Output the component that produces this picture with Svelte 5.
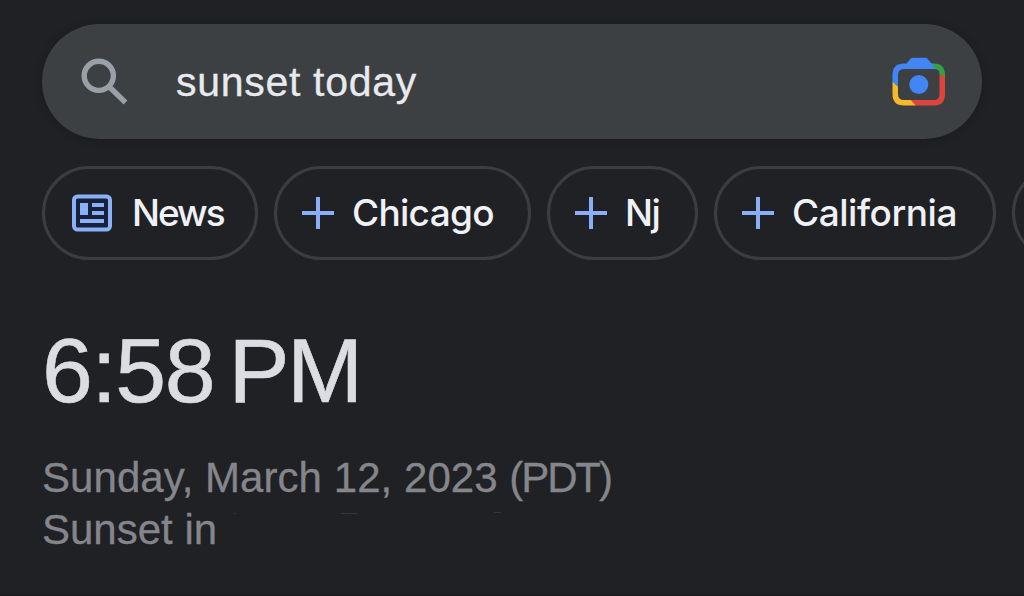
<script lang="ts">
	type Chip = { label: string; icon: 'news' | 'plus'; width: number; spacing: number };

	let query = 'sunset today';
	let chips: Chip[] = [
		{ label: 'News', icon: 'news', width: 216, spacing: -2 },
		{ label: 'Chicago', icon: 'plus', width: 257, spacing: -0.7 },
		{ label: 'Nj', icon: 'plus', width: 151, spacing: -1.4 },
		{ label: 'California', icon: 'plus', width: 282, spacing: -0.45 },
		{ label: '', icon: 'plus', width: 160, spacing: 0 }
	];
</script>

<main class="page">
	<div class="search">
		<svg class="search-icon" viewBox="0 0 48 48" width="48" height="48">
			<circle cx="18.8" cy="17.8" r="14.6" />
			<path d="M29.500 29L45.500 44.500" />
		</svg>
		<span class="query">{query}</span>
		<svg class="lens" viewBox="0 0 54 50" width="54" height="50">
			<path class="blue" d="M0.500 26V18Q0.500 6.500 12 6.500H14.500L18.500 1.800Q19.500 0.800 21 0.800H33Q34.500 0.800 35.500 1.800L39.500 6.500H41L44 12H12Q6 12 6 18V29Z" />
			<path class="green" d="M40 6.500H42Q53 6.500 53 18V21L47.500 17Q47.500 12 42 12H43.500Z" />
			<path class="red" d="M47.500 16.500L53 20V37Q53 48.500 42 48.500H23L18.500 43H42Q47.500 43 47.500 37Z" />
			<path class="yellow" d="M0.500 25L6 29.500V37Q6 43 12 43H19L23.500 48.500H12Q0.500 48.500 0.500 37Z" />
			<circle class="blue" cx="26.800" cy="27.500" r="9.500" />
		</svg>
	</div>

	<div class="chips">
		{#each chips as chip}
			<div class="chip" style="width: {chip.width}px">
				{#if chip.icon === 'news'}
					<svg class="news" viewBox="0 0 40 38" width="40" height="38">
						<rect class="frame" x="2" y="2.500" width="36" height="33" rx="3.500" />
						<path d="M8 9h8v12H8zM20 9h12v4H20zM20 17h12v4H20zM8 25h24v4H8z" />
					</svg>
				{:else}
					<svg class="plus" viewBox="0 0 32 32" width="32" height="32">
						<path d="M16 0V32M0 16H32" />
					</svg>
				{/if}
				<span class="label" style="letter-spacing: {chip.spacing}px">{chip.label}</span>
			</div>
		{/each}
	</div>

	<section class="answer">
		<div class="time"><span class="clock">6:58</span><span class="period">PM</span></div>
		<div class="line date">Sunday, March 12, 2023 <span class="zone">(PDT)</span></div>
		<div class="line place">
			<span>Sunset in</span>
			<svg class="specks" viewBox="0 0 300 52" width="300" height="52">
				<path d="M14 9.500h2M121 9.500h16M274 8.500h7" />
			</svg>
		</div>
	</section>
</main>

<style>
	:global(body) {
		background: #202125;
		overflow: hidden;
	}
	.page {
		box-sizing: border-box;
		width: 1024px;
		height: 596px;
		padding: 24px 0 0 42px;
		overflow: hidden;
		background: #202125;
		border-bottom: 1px solid #17181a;
		font-family: 'Liberation Sans', Arial, sans-serif;
	}
	.search {
		box-sizing: border-box;
		display: flex;
		align-items: center;
		width: 940px;
		height: 115px;
		padding: 0 36px 0 38px;
		border-radius: 58px;
		background: #3c4043;
		box-shadow: 0 1px 7px rgba(23, 20, 24, 0.5);
	}
	.search-icon {
		flex: none;
		fill: none;
		stroke: #9aa0a8;
		stroke-width: 5.4;
	}
	.query {
		flex: 1;
		margin-left: 48px;
		font-size: 41px;
		line-height: 48px;
		letter-spacing: 0.7px;
		color: #e8eaed;
		-webkit-text-stroke: 0.3px #e8eaed;
	}
	.lens {
		flex: none;
	}
	.blue {
		fill: #4285f4;
	}
	.green {
		fill: #34a048;
	}
	.red {
		fill: #dc443c;
	}
	.yellow {
		fill: #f5b92a;
	}
	.chips {
		display: flex;
		gap: 16px;
		margin-top: 27px;
	}
	.chip {
		box-sizing: border-box;
		flex: none;
		display: flex;
		align-items: center;
		height: 94px;
		padding-left: 25px;
		border: 3px solid #3c3d41;
		border-radius: 47px;
	}
	.news,
	.plus {
		flex: none;
	}
	.news {
		margin: 0 20px 0 2px;
		fill: #8ab0f8;
	}
	.frame {
		fill: #17223a;
		stroke: #8ab0f8;
		stroke-width: 4;
	}
	.plus {
		margin-right: 18px;
		stroke: #8aaef8;
		stroke-width: 4;
	}
	.label {
		font-family: Inter, Roboto, sans-serif;
		font-size: 37px;
		font-weight: 500;
		line-height: 46px;
		white-space: nowrap;
		color: #f0f1f6;
	}
	.answer {
		margin-top: 58px;
	}
	.time {
		display: flex;
		height: 105px;
		font-size: 91.5px;
		line-height: 105px;
		color: #dcdde2;
		-webkit-text-stroke: 0.6px #dcdde2;
	}
	.clock {
		width: 186.5px;
		letter-spacing: -1.5px;
	}
	.period {
		letter-spacing: -2.5px;
	}
	.line {
		display: flex;
		font-size: 42px;
		line-height: 52px;
		white-space: pre;
		color: #85868b;
		-webkit-text-stroke: 0.3px #85868b;
	}
	.date {
		margin-top: 29px;
		letter-spacing: 0.05px;
	}
	.zone {
		letter-spacing: -2.1px;
	}
	.specks {
		margin-left: 3px;
		fill: none;
		stroke: #34353a;
		stroke-width: 1;
	}
</style>
